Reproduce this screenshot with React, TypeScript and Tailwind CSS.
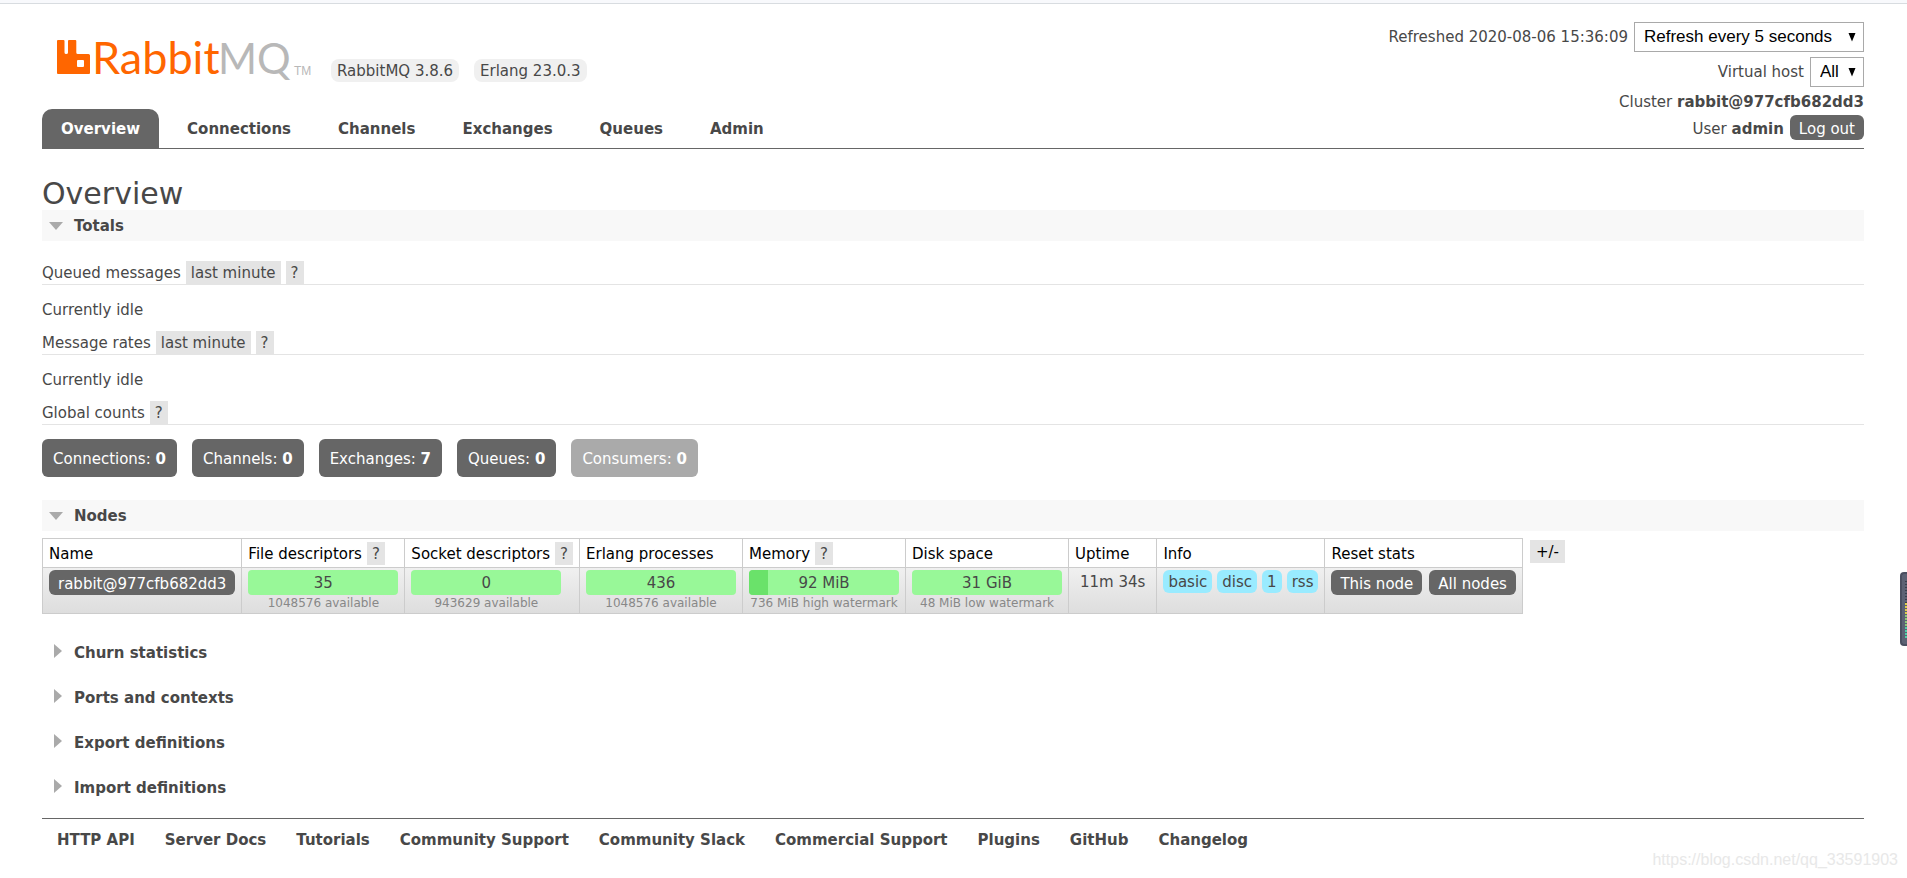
import type { ReactNode } from "react";

const navItems = ["Overview", "Connections", "Channels", "Exchanges", "Queues", "Admin"];

const globalCounts = [
  { label: "Connections", value: 0, disabled: false },
  { label: "Channels", value: 0, disabled: false },
  { label: "Exchanges", value: 7, disabled: false },
  { label: "Queues", value: 0, disabled: false },
  { label: "Consumers", value: 0, disabled: true },
];

const nodeColumns = [
  { label: "Name", help: false },
  { label: "File descriptors", help: true },
  { label: "Socket descriptors", help: true },
  { label: "Erlang processes", help: false },
  { label: "Memory", help: true },
  { label: "Disk space", help: false },
  { label: "Uptime", help: false },
  { label: "Info", help: false },
  { label: "Reset stats", help: false },
];

const nodeMeters = [
  { value: "35", note: "1048576 available", used: 0 },
  { value: "0", note: "943629 available", used: 0 },
  { value: "436", note: "1048576 available", used: 0 },
  { value: "92 MiB", note: "736 MiB high watermark", used: 12.5 },
  { value: "31 GiB", note: "48 MiB low watermark", used: 0 },
];

const nodeTags = ["basic", "disc", "1", "rss"];

const collapsedSections = [
  "Churn statistics",
  "Ports and contexts",
  "Export definitions",
  "Import definitions",
];

const footerLinks = [
  "HTTP API",
  "Server Docs",
  "Tutorials",
  "Community Support",
  "Community Slack",
  "Commercial Support",
  "Plugins",
  "GitHub",
  "Changelog",
];

function Logo() {
  return (
    <svg viewBox="0 0 262 48" className="h-[48px] w-[262px] overflow-visible" role="img" aria-label="RabbitMQ">
      <path
        d="M4 6H9.500Q10.500 6 10.500 7V18.500Q10.500 20 12.200 20Q14 20 14 18.500V7Q14 6 15 6H21.300Q22.300 6 22.300 7V18.500Q22.300 20 23.800 20H34.500Q36 20 36 21.500V39Q36 40 35 40H4Q3 40 3 39V7Q3 6 4 6ZM24 26Q23 26 23 27V32Q23 33 24 33H29Q30 33 30 32V27Q30 26 29 26Z"
        fill="#ff6600"
        fillRule="evenodd"
      />
      <text x="38" y="40" fontFamily="Lato, sans-serif" fontSize="45" fill="#ff6600">
        Rabbit
      </text>
      <text x="164" y="40" fontFamily="Lato, sans-serif" fontSize="42" fill="#b8b8b8">
        MQ
      </text>
      <text x="240" y="41" fontFamily="'Liberation Sans', sans-serif" fontSize="12" fill="#b8b8b8">
        TM
      </text>
    </svg>
  );
}

type SelectBoxProps = {
  id: string;
  label: string;
  option: string;
  width: string;
};

function SelectBox({ id, label, option, width }: SelectBoxProps) {
  return (
    <div className="flex items-center gap-[6px]">
      <label htmlFor={id}>{label}</label>
      <div className="relative">
        <select
          id={id}
          className={`block h-[30px] appearance-none border border-[#a9a9a9] bg-white pl-[9px] font-['Liberation_Sans',sans-serif] text-[17px] text-black ${width}`}
        >
          <option>{option}</option>
        </select>
        <svg viewBox="0 0 8 9" className="pointer-events-none absolute top-[11px] right-2 h-[9px] w-2">
          <path d="M0.500 0H7.500L4 8.500Z" fill="#000" />
        </svg>
      </div>
    </div>
  );
}

function Help() {
  return (
    <button type="button" className="h-[23px] bg-[#e4e4e4] px-[5px] text-[#484848]">
      ?
    </button>
  );
}

function Section({ title, open = false }: { title: string; open?: boolean }) {
  return (
    <h2 className={open ? "bg-[#f8f8f8] font-bold" : "font-bold"}>
      <button type="button" aria-expanded={open} className="flex h-[31px] w-full items-center">
        {open ? (
          <span className="flex w-8 justify-center pr-[4px]">
            <svg viewBox="0 0 14 8" className="h-2 w-[14px]">
              <path d="M0 0H14L7 8Z" fill="#aaa" />
            </svg>
          </span>
        ) : (
          <span className="flex w-8 justify-center">
            <svg viewBox="0 0 8 14" className="mb-1 h-[14px] w-2">
              <path d="M0 0L8 7L0 14Z" fill="#aaa" />
            </svg>
          </span>
        )}
        {title}
      </button>
    </h2>
  );
}

function StatHeading({ title, children }: { title: string; children: ReactNode }) {
  return (
    <div className="flex items-center gap-[5px] border-b border-[#e4e4e4]">
      <span>{title}</span>
      {children}
    </div>
  );
}

function Range() {
  return (
    <button type="button" className="h-[23px] bg-[#e4e4e4] px-[5px]">
      last minute
    </button>
  );
}

function DarkButton({ children }: { children: ReactNode }) {
  return (
    <button type="button" className="h-[25px] rounded-md bg-[#666] px-[9px] pt-[2px] whitespace-nowrap text-white">
      {children}
    </button>
  );
}

function NodesTable() {
  return (
    <table className="border-collapse">
      <thead>
        <tr>
          {nodeColumns.map((column) => (
            <th
              key={column.label}
              className="h-[29px] border border-[#ccc] px-[6px] pt-px text-left font-normal whitespace-nowrap text-black"
            >
              <div className="flex items-center gap-[5px]">
                {column.label}
                {column.help && <Help />}
              </div>
            </th>
          ))}
        </tr>
      </thead>
      <tbody>
        <tr className="h-[46px] bg-linear-to-b from-[#f0f0f0] to-[#dddddd] align-top">
          <td className="border border-[#ccc] px-[6px] pt-[2px]">
            <DarkButton>rabbit@977cfb682dd3</DarkButton>
          </td>
          {nodeMeters.map((meter, index) => (
            <td key={index} className="border border-[#ccc] px-[6px] pt-[2px]">
              <div className="relative h-[25px] w-[150px] overflow-hidden rounded bg-[#98f898] text-center leading-[27px]">
                <div className="absolute inset-y-0 left-0 bg-[#6ae26a]" style={{ width: `${meter.used}%` }} />
                <span className="relative">{meter.value}</span>
              </div>
              <div className="w-[150px] text-center text-[12px] leading-[16px] whitespace-nowrap text-[#888]">
                {meter.note}
              </div>
            </td>
          ))}
          <td className="border border-[#ccc] px-[11px] pt-[2px] leading-[25px] whitespace-nowrap">11m 34s</td>
          <td className="border border-[#ccc] px-[6px] pt-[2px]">
            <div className="flex gap-[5px]">
              {nodeTags.map((tag) => (
                <span key={tag} className="h-[23px] rounded-md bg-[#99ebff] px-[5px] leading-[25px]">
                  {tag}
                </span>
              ))}
            </div>
          </td>
          <td className="border border-[#ccc] px-[6px] pt-[2px]">
            <div className="flex gap-[7px]">
              <DarkButton>This node</DarkButton>
              <DarkButton>All nodes</DarkButton>
            </div>
          </td>
        </tr>
      </tbody>
    </table>
  );
}

function MeterWidget() {
  return (
    <div className="absolute top-[572px] right-0 h-[74px] w-[7px] rounded-l border-2 border-r-0 border-[#4a4f60] bg-[#5c6274] py-[7px] pl-[3px]">
      <div className="h-[22px] bg-[repeating-linear-gradient(#3a3e4b_0px_1px,#5c6274_1px_3px)]" />
      <div className="h-[12px] bg-[repeating-linear-gradient(#e0cf4c_0px_2px,#5c6274_2px_3px)]" />
      <div className="h-[12px] bg-[repeating-linear-gradient(#8ecb76_0px_2px,#5c6274_2px_3px)]" />
      <div className="h-[12px] bg-[repeating-linear-gradient(#4fd0a8_0px_2px,#5c6274_2px_3px)]" />
    </div>
  );
}

export default function App() {
  return (
    <div className="relative min-h-screen bg-white font-['DejaVu_Sans',sans-serif] text-[15px] leading-[22px] text-[#484848]">
      <div className="h-1 border-b border-[#d8dce0] bg-[#f8f9fc]" />

      <div className="pr-[43px] pl-[42px]">
        <header className="flex justify-between border-b border-[#666]">
          <div className="flex flex-col justify-between pt-[30px]">
            <div className="flex items-end gap-[15px] pl-3">
              <Logo />
              <span className="h-[23px] rounded-lg bg-[#f0f0f0] px-[6px] leading-[25px]">RabbitMQ 3.8.6</span>
              <span className="h-[23px] rounded-lg bg-[#f0f0f0] px-[6px] leading-[25px]">Erlang 23.0.3</span>
            </div>
            <nav>
              <ul className="flex gap-[9px]">
                {navItems.map((item, index) => (
                  <li key={item}>
                    <a
                      href="#"
                      aria-current={index === 0 ? "page" : undefined}
                      className={
                        index === 0
                          ? "block h-[39px] rounded-t-[10px] bg-[#666] px-[19px] font-bold leading-[40px] text-white"
                          : "block h-[39px] px-[19px] font-bold leading-[40px]"
                      }
                    >
                      {item}
                    </a>
                  </li>
                ))}
              </ul>
            </nav>
          </div>

          <div className="flex flex-col items-end pt-[18px] pb-2">
            <SelectBox
              id="refresh"
              label="Refreshed 2020-08-06 15:36:09"
              option="Refresh every 5 seconds"
              width="w-[230px]"
            />
            <div className="mt-[5px]">
              <SelectBox id="vhost" label="Virtual host" option="All" width="w-[54px]" />
            </div>
            <p className="mt-1">
              Cluster <strong>rabbit@977cfb682dd3</strong>
            </p>
            <div className="mt-[2px] flex items-center gap-[6px]">
              <span className="pt-[2px]">
                User <strong>admin</strong>
              </span>
              <DarkButton>Log out</DarkButton>
            </div>
          </div>
        </header>

        <main>
          <h1 className="pt-[28px] text-[30px] leading-[33px]">Overview</h1>

          <Section title="Totals" open />
          <div className="pt-5">
            <StatHeading title="Queued messages">
              <Range />
              <Help />
            </StatHeading>
            <p className="pt-[14px] pb-[10px]">Currently idle</p>
            <StatHeading title="Message rates">
              <Range />
              <Help />
            </StatHeading>
            <p className="pt-[14px] pb-[10px]">Currently idle</p>
            <StatHeading title="Global counts">
              <Help />
            </StatHeading>
          </div>
          <ul className="mt-[14px] flex gap-[15px]">
            {globalCounts.map((count) => (
              <li key={count.label}>
                <a
                  href="#"
                  className={
                    count.disabled
                      ? "block h-[38px] rounded-md bg-[#aaa] px-[11px] leading-[40px] text-white"
                      : "block h-[38px] rounded-md bg-[#666] px-[11px] leading-[40px] text-white"
                  }
                >
                  {count.label}: <strong>{count.value}</strong>
                </a>
              </li>
            ))}
          </ul>

          <div className="mt-[23px]">
            <Section title="Nodes" open />
          </div>
          <div className="mt-[7px] flex items-start gap-[7px]">
            <NodesTable />
            <button type="button" className="mt-[2px] h-[23px] bg-[#e4e4e4] px-[6px] pt-px text-black">
              +/-
            </button>
          </div>

          <div className="mt-[23px] flex flex-col gap-[14px]">
            {collapsedSections.map((title) => (
              <Section key={title} title={title} />
            ))}
          </div>
        </main>

        <footer className="mt-[15px] border-t border-[#666] pt-[10px] pl-[15px]">
          <ul className="flex gap-[30px] font-bold">
            {footerLinks.map((link) => (
              <li key={link}>
                <a href="#">{link}</a>
              </li>
            ))}
          </ul>
        </footer>
      </div>

      <MeterWidget />
      <div className="absolute right-[9px] bottom-[7px] font-['Liberation_Sans',sans-serif] text-[16px] text-[#e8e8e8]">
        https://blog.csdn.net/qq_33591903
      </div>
    </div>
  );
}
